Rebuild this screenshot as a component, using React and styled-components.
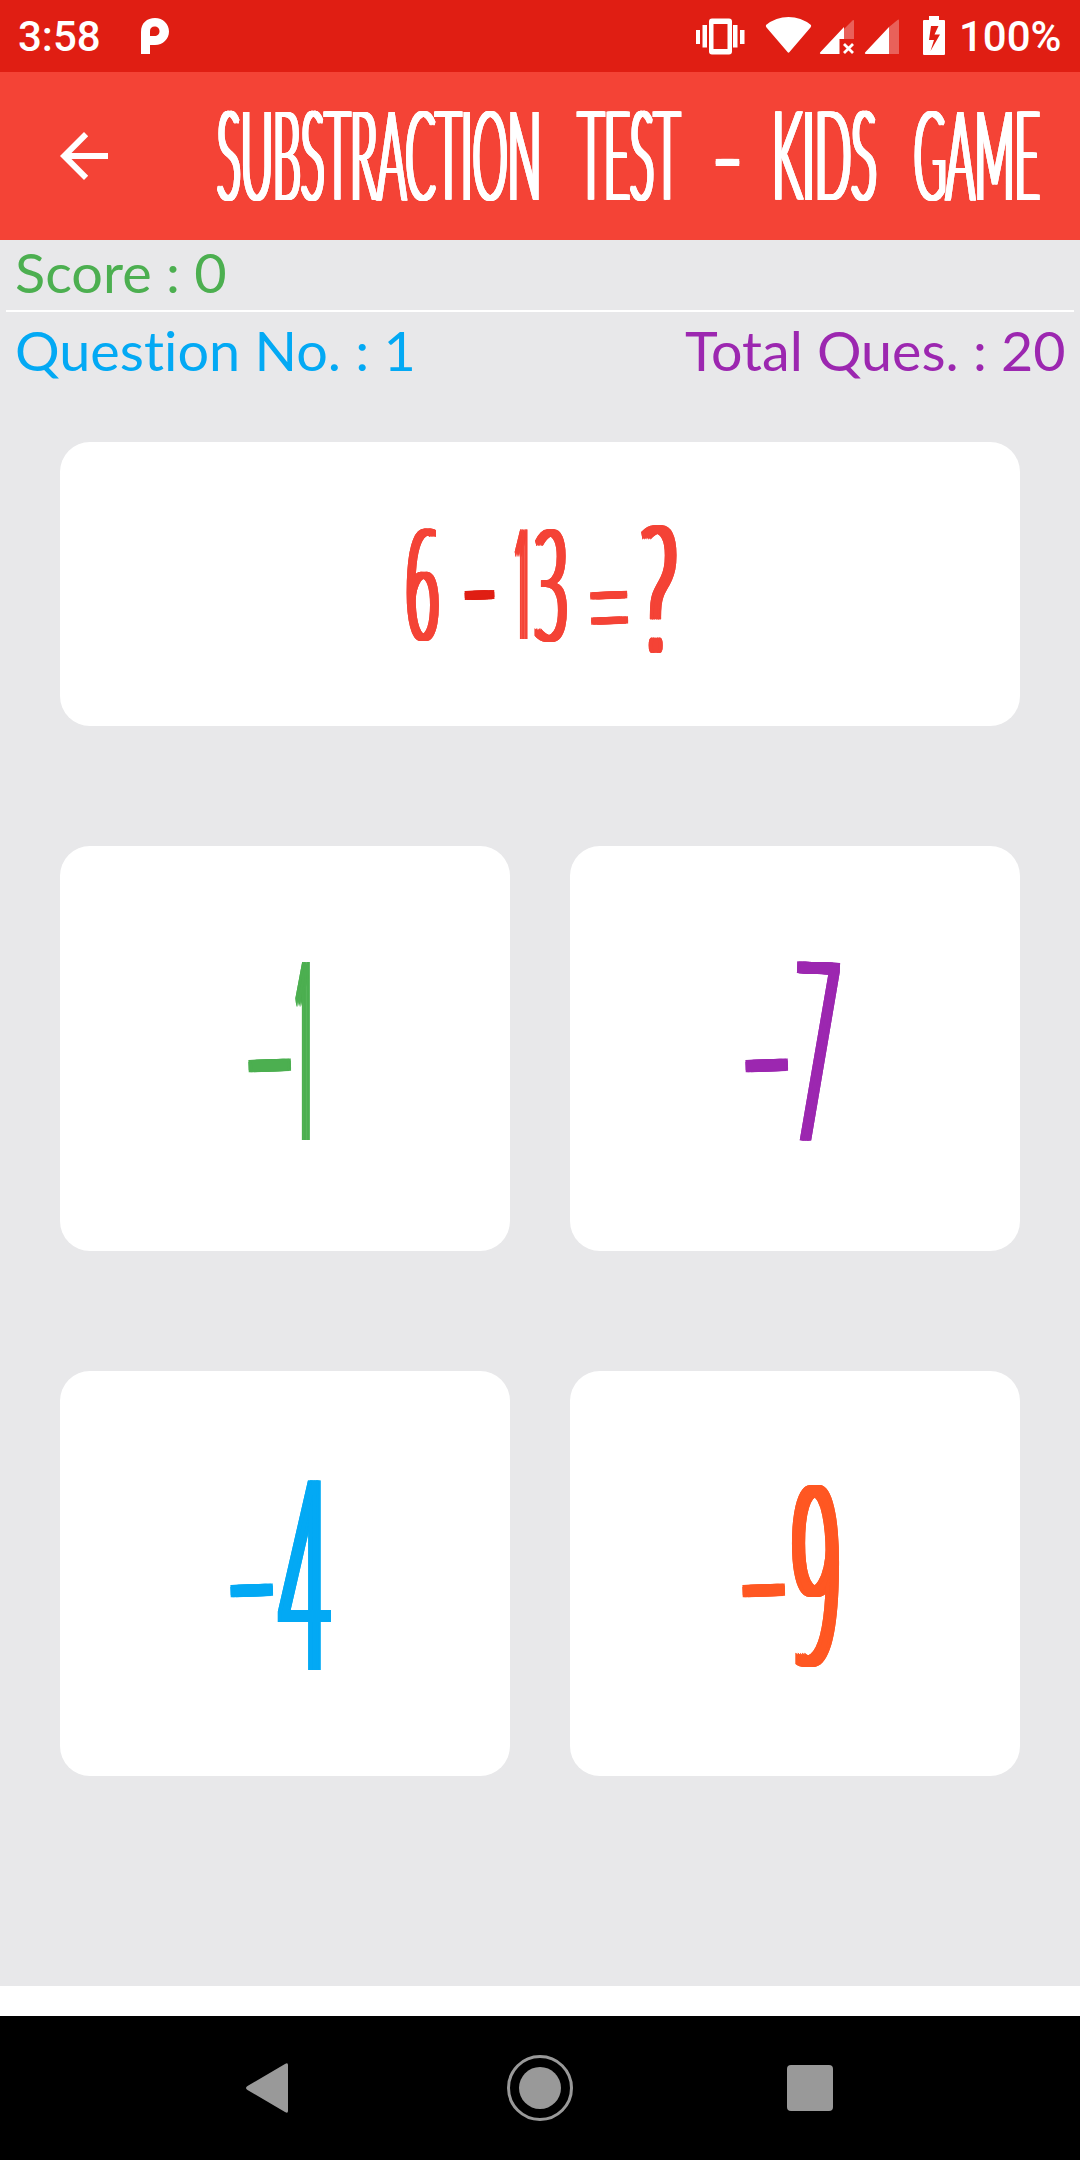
import React, { useLayoutEffect, useRef, useState } from 'react';
import styled, { createGlobalStyle } from 'styled-components';

const colors = {
  primary: '#f44336',
  primaryDark: '#e01e13',
  green: '#4caf50',
  blue: '#03a9f4',
  purple: '#9c27b0',
  orange: '#ff5722',
};

// squeezes a run of text to an exact width
const Fit = ({ width, size, drop = 0, tilt = 0, color, ink = 0, rise = 0, weight = 300, face, children }) => {
  const ref = useRef(null);
  const [scale, setScale] = useState(1);

  useLayoutEffect(() => {
    setScale(width / ref.current.offsetWidth);
  }, [width]);

  return (
    <FitBox $width={width}>
      <FitText
        ref={ref}
        $size={size}
        $color={color}
        $ink={ink}
        $rise={rise}
        $weight={weight}
        $face={face}
        style={{ transform: `translateY(${drop}px) rotate(${tilt}deg) scaleX(${scale})` }}
      >
        {children}
      </FitText>
    </FitBox>
  );
};

const title = [
  { text: 'SUBSTRACTION', width: 324, gap: 0 },
  { text: 'TEST', width: 102, gap: 37 },
  { text: '-', width: 27, gap: 34, drop: -5, rise: 1 },
  { text: 'KIDS', width: 105, gap: 31 },
  { text: 'GAME', width: 126, gap: 37 },
];

const question = [
  { text: '6', width: 33, gap: 2, size: 154, drop: -4 },
  { text: '-', width: 28, gap: 26, size: 157, drop: -7, tilt: -2, rise: 1, color: colors.primaryDark },
  { text: '1', width: 16, gap: 22, size: 154, drop: -5, ink: 16 },
  { text: '3', width: 33, gap: 4, size: 154, drop: -3 },
  { text: '=', width: 36, gap: 23, size: 126, drop: 20, tilt: -2, rise: 1 },
  { text: '?', width: 32, gap: 16, size: 174, drop: 0, ink: 9 },
];

const answers = [
  { digit: '1', color: colors.green, left: 181, width: 20, size: 250, gap: -2, ink: 22 },
  { digit: '7', color: colors.purple, left: 168, width: 44, size: 250, gap: 0, ink: 12, tilt: 2 },
  { digit: '4', color: colors.blue, left: 163, width: 48, size: 264, gap: 1, ink: 13 },
  { digit: '9', color: colors.orange, left: 165, width: 48, size: 248, gap: 1, ink: 13 },
];

const App = () => (
  <Screen>
    <GlobalStyle />
    <StatusBar>
      <Clock>3:58</Clock>
      <AppMark width="30" height="38" viewBox="0 0 30 38">
        <path
          fillRule="evenodd"
          d="M1 37V15C1 6 7 1 15 1C23 1 29 7 29 14.500C29 22 23 28 15 28H10V37ZM10 19V14C10 11 12 9.500 14.500 9.500C17.500 9.500 19.500 11.500 19.500 14.200C19.500 17 17.500 19 14.500 19Z"
        />
      </AppMark>
      <StatusIcons width="256" height="72" viewBox="690 0 256 72">
        <path d="M696 30h4v14h-4zM702.500 25h4.500v22.500h-4.500zM733 25h4.500v22.500H733zM740 30h4.500v14H740z" />
        <path
          fillRule="evenodd"
          d="M712 18.500h17q3 0 3 3v30q0 3-3 3h-17q-3 0-3-3v-30q0-3 3-3zM713.500 24v25h14V24z"
        />
        <path d="M766 25q10-8 22.500-8t22.500 8q.5 1-.5 2.500L789.500 52q-1 1.500-2 0L766.500 27.500q-1-1.500-.5-2.500z" />
        <path opacity=".3" d="M844 29l8.500-8.500q1.500-1 1.500.5v18h-10z" />
        <path d="M844 27v12h-4.500v15H821q-2-.5-.5-2z" />
        <path d="M844 44l9 9m0-9l-9 9" fill="none" stroke="#fff" strokeWidth="2.800" />
        <path opacity=".3" d="M889 27l8.500-7q1.500-1 1.500.5V54h-10z" />
        <path d="M889 27v27h-23q-2-.5-.5-2z" />
        <path
          fillRule="evenodd"
          d="M929 16h10v4h5q1 0 1 1v33q0 1-1 1h-20q-1 0-1-1V21q0-1 1-1h5zM931 26l-2 14h5l-3.500 11L940 34.500h-5.500l4-8.500z"
        />
      </StatusIcons>
      <Battery>100%</Battery>
    </StatusBar>

    <AppBar>
      <BackButton aria-label="Back">
        <svg width="48" height="48" viewBox="0 0 48 48" fill="#fff">
          <path d="M48 21H11.500L28.200 4.200 24 0 0 24l24 24 4.200-4.200L11.500 27H48z" />
        </svg>
      </BackButton>
      <Title>
        {title.map(({ text, width, gap, drop = -4, rise = 0.4 }) => (
          <Slot key={text} $gap={gap}>
            <Fit width={width} size={124} drop={drop} ink={5.5} rise={rise} color="#fff">
              {text}
            </Fit>
          </Slot>
        ))}
      </Title>
    </AppBar>

    <Board>
      <ScoreRow>
        <Fit width={212} size={54} weight={400} color={colors.green}>
          Score : 0
        </Fit>
      </ScoreRow>
      <Divider />
      <CountRow>
        <Fit width={401} size={54} weight={400} color={colors.blue}>
          Question No. : 1
        </Fit>
        <Fit width={381} size={54} weight={400} color={colors.purple}>
          Total Ques. : 20
        </Fit>
      </CountRow>

      <QuestionCard>
        {question.map(({ text, width, gap, color, ...rest }) => (
          <Slot key={text} $gap={gap}>
            <Fit width={width} ink={8} face="Open Sans" color={color || colors.primary} {...rest}>
              {text}
            </Fit>
          </Slot>
        ))}
      </QuestionCard>

      <Answers>
        {answers.map(({ digit, color, left, width, size, gap, ink, tilt }) => (
          <AnswerCard key={digit} $left={left}>
            <Fit width={56} size={248} ink={6} rise={1} drop={-5} tilt={-2} color={color}>
              -
            </Fit>
            <Slot $gap={gap}>
              <Fit width={width} size={size} ink={ink} drop={-6} tilt={tilt} face="Open Sans" color={color}>
                {digit}
              </Fit>
            </Slot>
          </AnswerCard>
        ))}
      </Answers>
    </Board>

    <NavBar>
      <svg width="44" height="50" viewBox="0 0 44 50">
        <path d="M40 1q3-2 3 1v46q0 3-3 1L2.500 27q-3-2 0-4z" />
      </svg>
      <HomeKey width="66" height="66" viewBox="0 0 66 66">
        <circle cx="33" cy="33" r="31.500" fill="none" stroke="#999" strokeWidth="3" />
        <circle cx="33" cy="33" r="21" />
      </HomeKey>
      <RecentKey />
    </NavBar>
  </Screen>
);

const GlobalStyle = createGlobalStyle`
  * {
    box-sizing: border-box;
  }
  body {
    margin: 0;
    background: #fff;
    font-family: Lato, 'Open Sans', sans-serif;
    font-variant-ligatures: none;
  }
`;

const Screen = styled.div`
  width: 1080px;
  height: 2160px;
  display: flex;
  flex-direction: column;
  overflow: hidden;
  background: #fff;
`;

const StatusBar = styled.header`
  height: 72px;
  flex: none;
  display: flex;
  align-items: center;
  padding-left: 18px;
  background: ${colors.primaryDark};
  color: #fff;
  font-family: Roboto, sans-serif;
  font-weight: 500;
  font-size: 42px;
  line-height: 72px;
`;
const Clock = styled.span`
  width: 122px;
  padding-top: 2px;
`;
const AppMark = styled.svg`
  fill: #fff;
`;
const StatusIcons = styled.svg`
  margin-left: auto;
  flex: none;
  fill: #fff;
`;
const Battery = styled.span`
  width: 134px;
  padding: 2px 0 0 13px;
`;

const AppBar = styled.div`
  height: 168px;
  flex: none;
  display: flex;
  align-items: center;
  background: ${colors.primary};
`;
const BackButton = styled.button`
  width: 108px;
  height: 168px;
  padding: 0 0 0 60px;
  border: 0;
  background: none;
  display: flex;
  align-items: center;
`;
const Title = styled.h1`
  display: flex;
  margin: 0 0 0 109px;
  font-weight: 300;
`;

const Slot = styled.span`
  display: flex;
  margin-left: ${(props) => props.$gap}px;
`;
const FitBox = styled.span`
  display: flex;
  flex: none;
  align-items: center;
  width: ${(props) => props.$width}px;
`;
const FitText = styled.span`
  flex: none;
  white-space: pre;
  transform-origin: 0 50%;
  font-family: ${(props) => (props.$face ? `'${props.$face}', sans-serif` : 'inherit')};
  font-size: ${(props) => props.$size}px;
  font-weight: ${(props) => props.$weight};
  line-height: 1;
  color: ${(props) => props.$color};
  text-shadow: ${({ $ink, $rise }) =>
    $ink
      ? [-1, -0.5, 0.5, 1]
          .flatMap((n) => [-$rise, $rise].map((y) => `${(n * $ink).toFixed(1)}px ${y}px 0 currentColor`))
          .join(', ')
      : 'none'};
`;

const Board = styled.main`
  height: 1746px;
  flex: none;
  background: #e8e8ea;
`;
const ScoreRow = styled.div`
  height: 70px;
  padding: 6px 15px 0;
`;
const Divider = styled.div`
  height: 2px;
  margin: 0 6px;
  background: #fff;
`;
const CountRow = styled.div`
  height: 130px;
  padding: 12px 14px 0 15px;
  display: flex;
  justify-content: space-between;
  align-items: flex-start;
`;

const QuestionCard = styled.section`
  height: 284px;
  margin: 0 60px;
  padding-left: 344px;
  display: flex;
  align-items: center;
  border-radius: 30px;
  background: #fff;
`;
const Answers = styled.div`
  display: grid;
  grid-template-columns: 450px 450px;
  grid-auto-rows: 405px;
  gap: 120px 60px;
  padding: 120px 60px 0;
`;
const AnswerCard = styled.button`
  display: flex;
  align-items: center;
  padding: 0 0 0 ${(props) => props.$left}px;
  border: 0;
  border-radius: 30px;
  background: #fff;
  font-family: inherit;
`;

const NavBar = styled.nav`
  height: 144px;
  margin-top: 30px;
  flex: none;
  display: flex;
  align-items: center;
  justify-content: space-between;
  padding: 0 247px 0 245px;
  background: #000;
  fill: #999;
`;
const HomeKey = styled.svg`
  margin-left: 4px;
`;
const RecentKey = styled.span`
  width: 46px;
  height: 46px;
  border-radius: 4px;
  background: #999;
`;

export default App;
